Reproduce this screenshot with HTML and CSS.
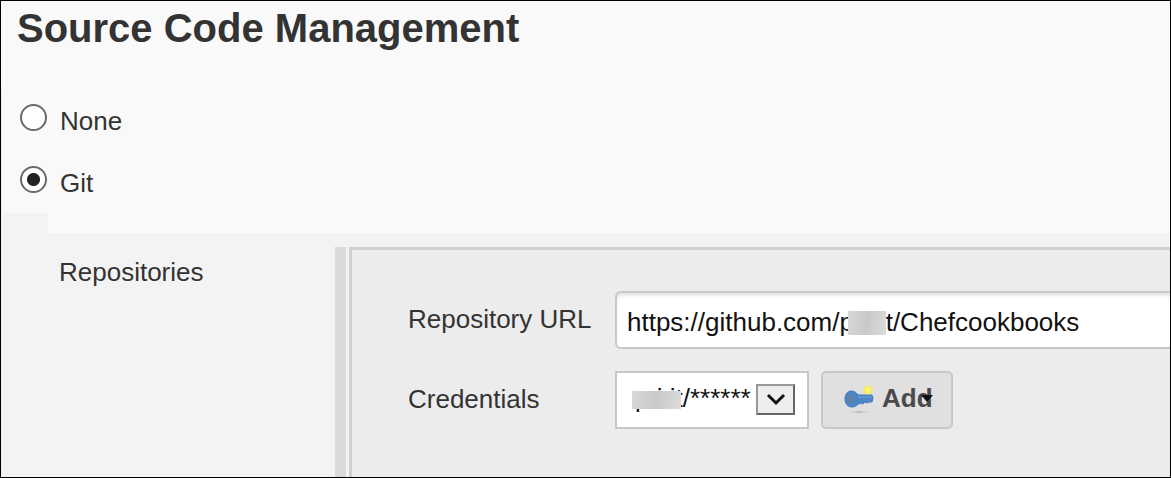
FILE: index.html
```
<!DOCTYPE html>
<html lang="en">
<head>
<meta charset="utf-8">
<title>Source Code Management</title>
<link rel="stylesheet" href="styles.css">
</head>
<body>
<main class="page">
  <h1 class="title">Source Code Management</h1>
  <form class="scm">
    <div class="choices">
      <label class="choice"><input class="radio" type="radio" name="scm"><span>None</span></label>
      <label class="choice"><input class="radio" type="radio" name="scm" checked><span>Git</span></label>
    </div>
    <div class="details">
      <div class="strip"></div>
      <div class="repositories">
        <div class="section-name">Repositories</div>
        <div class="handle"></div>
        <div class="panel">
          <label class="field-name" for="url">Repository URL</label>
          <div class="field">
            <input class="url" id="url" type="text" value="https://github.com/p&nbsp;r&nbsp;rt/Chefcookbooks">
            <span class="mask mask-url"></span>
          </div>
          <label class="field-name" for="credentials">Credentials</label>
          <div class="row">
            <div class="field">
              <select class="credentials" id="credentials"><option>p&nbsp;i&nbsp;it/******</option></select>
              <span class="mask mask-user"></span>
              <span class="drop"><svg width="20" height="14" viewBox="0 0 20 14"><path d="M2 2l8 8 8-8" fill="none" stroke="#111" stroke-width="3"/></svg></span>
            </div>
            <button class="add" type="button">
              <svg class="key" width="32" height="30" viewBox="0 0 32 30">
                <defs>
                  <radialGradient id="glow"><stop offset="0" stop-color="#fffbb0"/><stop offset=".45" stop-color="#fff04a"/><stop offset="1" stop-color="#f5e93c" stop-opacity=".35"/></radialGradient>
                  <radialGradient id="shade"><stop offset="0" stop-color="#aaa"/><stop offset="1" stop-color="#ddd" stop-opacity="0"/></radialGradient>
                </defs>
                <ellipse cx="15" cy="27" rx="13" ry="2" fill="url(#shade)"/>
                <path d="M7 6c3 0 5 1 7 4h14l1 3-1 4h-3l-2 1-2-1-2 2-2-1-2 1h-1c-1 2-4 3-6 3-4 0-7-3-7-8s3-8 6-8z" fill="#4b86c8" stroke="#4179b9"/>
                <path d="M14 12h14" stroke="#74a4d8" stroke-width="1"/>
                <ellipse cx="6" cy="14" rx="3" ry="4" fill="#65809c"/>
                <circle cx="24" cy="5" r="5" fill="url(#glow)"/>
              </svg>
              <span>Add</span>
              <svg class="caret" width="12" height="10" viewBox="0 0 12 10"><path d="M0 1h12L6 8z" fill="#111"/></svg>
            </button>
          </div>
        </div>
      </div>
    </div>
  </form>
</main>
</body>
</html>
```
FILE: styles.css
```
* { box-sizing: border-box; }
body {
  margin: 0;
  font-family: "Liberation Sans", Arial, sans-serif;
  font-size: 26px;
  line-height: 32px;
  color: #333;
}
.page {
  display: flex;
  flex-direction: column;
  min-height: 100vh;
  border: 1px solid #000;
  background: #f9f9f9;
  overflow: hidden;
}
.title {
  margin: 0 0 39px;
  padding: 5px 16px 0;
  font-size: 40px;
  line-height: 44px;
}
.scm {
  flex: 1;
  display: flex;
  flex-direction: column;
  border-left: 1px solid #eee;
}
.choices {
  display: flex;
  flex-direction: column;
  gap: 29px;
  padding: 15px 18px 14px;
}
.choice {
  display: flex;
  align-items: flex-start;
  gap: 13px;
}
.choice span { padding-top: 1px; }
.radio {
  appearance: none;
  width: 27px;
  height: 27px;
  margin: 0;
  border: 2px solid #6a6a6a;
  border-radius: 50%;
  background: #fff;
}
.radio:checked { background: radial-gradient(circle, #222 6px, #fff 7px); }
.details {
  flex: 1;
  display: flex;
  flex-direction: column;
  background: #f3f3f3;
}
.strip {
  height: 20px;
  margin-left: 46px;
  background: #f9f9f9;
}
.repositories {
  flex: 1;
  display: flex;
  padding: 14px 0 0 57px;
}
.section-name {
  width: 276px;
  padding-top: 9px;
}
.handle {
  width: 11px;
  margin-right: 3px;
  background: #dadada;
}
.panel {
  flex: 1;
  display: grid;
  grid-template-columns: 207px 1fr;
  grid-auto-rows: 58px;
  row-gap: 22px;
  padding: 41px 0 40px 56px;
  border: solid #d0d0d0;
  border-width: 3px 0 0 3px;
  background: #ececec;
}
.field-name { padding-top: 12px; }
.row { display: flex; gap: 12px; }
.field { position: relative; }
.url, .credentials, .add {
  height: 58px;
  margin: 0;
  border: 2px solid #c8c8c8;
  font-family: inherit;
  font-size: 26px;
  color: #111;
}
.url {
  width: 100%;
  padding: 4px 10px 0;
  border-right-width: 0;
  border-radius: 6px 0 0 6px;
  background: #fff;
  box-shadow: inset 0 4px 4px -2px #ddd;
}
.credentials {
  appearance: none;
  width: 194px;
  padding: 0 50px 4px 18px;
  border-radius: 0;
  background: #fff;
}
.mask {
  position: absolute;
  background: linear-gradient(100deg, #d8d8d8, #c9c9c9 50%, #dcdcdc);
  pointer-events: none;
}
.mask-url { left: 233px; top: 20px; width: 38px; height: 24px; }
.mask-user { left: 17px; top: 20px; width: 49px; height: 18px; }
.drop {
  position: absolute;
  top: 13px;
  right: 14px;
  display: flex;
  align-items: center;
  justify-content: center;
  width: 39px;
  height: 31px;
  border: 2px solid #999;
  border-right-color: #666;
  border-bottom-color: #666;
  background: #eee;
  pointer-events: none;
}
.add {
  position: relative;
  display: flex;
  align-items: center;
  gap: 6px;
  width: 132px;
  padding: 0 0 0 21px;
  border-radius: 5px;
  background: #e0e0e0;
  font-weight: bold;
  color: #4a4a4a;
}
.add span { padding-bottom: 3px; }
.caret { position: absolute; right: 18px; top: 21px; }
```
